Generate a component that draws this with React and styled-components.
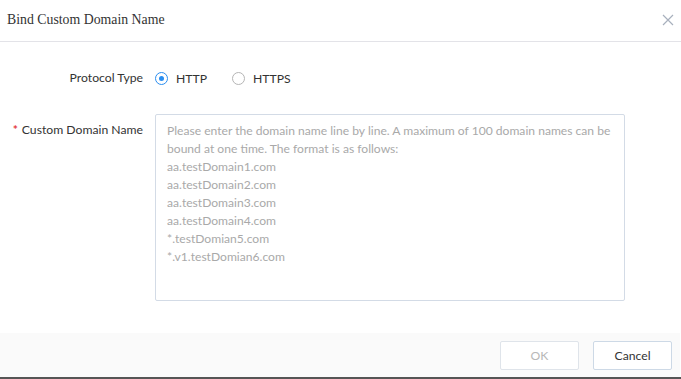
import React, { useState } from "react";
import styled, { createGlobalStyle } from "styled-components";

const GlobalStyle = createGlobalStyle`
  html, body {
    margin: 0;
    padding: 0;
    background: #fff;
  }
  * {
    box-sizing: border-box;
  }
`;

const Dialog = styled.div`
  width: 681px;
  height: 379px;
  display: flex;
  flex-direction: column;
  background: #fff;
  border-bottom: 2px solid #555;
  font-family: Lato, "Liberation Sans", sans-serif;
  font-size: 12.2px;
  color: #333;
`;

const Header = styled.div`
  height: 42px;
  display: flex;
  align-items: center;
  justify-content: space-between;
  padding: 0 6px 2px 7px;
  border-bottom: 1px solid #e3e3e8;
`;

const Title = styled.span`
  font-family: "Liberation Serif", serif;
  font-size: 13.8px;
  color: #333;
`;

const CloseButton = styled.button`
  border: none;
  background: none;
  padding: 0;
  width: 14px;
  height: 14px;
  display: flex;
  cursor: pointer;
`;

const Body = styled.div`
  flex: 1;
  padding: 27px 0 0;
  display: flex;
  flex-direction: column;
  gap: 27px;
`;

const Row = styled.div`
  display: flex;
  align-items: ${(p) => (p.$top ? "flex-start" : "center")};
`;

const Label = styled.label`
  width: 155px;
  text-align: right;
  padding-right: 12px;
  flex-shrink: 0;
  color: #333;
  line-height: 18px;
  padding-top: ${(p) => (p.$top ? "7px" : "0")};
  & span {
    color: #e4393c;
    font-weight: bold;
    margin-right: 4px;
  }
`;

const RadioGroup = styled.div`
  display: flex;
  align-items: center;
  gap: 25px;
`;

const Radio = styled.label`
  display: flex;
  align-items: center;
  gap: 8px;
  cursor: pointer;
  color: #333;
`;

const Dot = styled.span`
  width: 13px;
  height: 13px;
  border-radius: 50%;
  border: 1px solid ${(p) => (p.$on ? "#2b8ef0" : "#b5b5b5")};
  display: flex;
  align-items: center;
  justify-content: center;
  &::after {
    content: "";
    width: 5px;
    height: 5px;
    border-radius: 50%;
    background: ${(p) => (p.$on ? "#2b8ef0" : "transparent")};
  }
`;

const TextArea = styled.textarea`
  width: 470px;
  height: 187px;
  border: 1px solid #d3dbe6;
  border-radius: 2px;
  padding: 7px 6px 7px 11px;
  font-family: Lato, "Liberation Sans", sans-serif;
  font-size: 12.1px;
  line-height: 18px;
  color: #333;
  resize: none;
  outline: none;
  &::placeholder {
    color: #a9a9a9;
  }
`;

const Footer = styled.div`
  height: 44px;
  background: #fafafa;
  margin-right: 1px;
  display: flex;
  align-items: center;
  justify-content: flex-end;
  gap: 14px;
  padding: 0 8px 0 0;
`;

const Button = styled.button`
  width: 79px;
  height: 29px;
  background: #fff;
  border: 1px solid ${(p) => (p.disabled ? "#dfe4ea" : "#cdd9e6")};
  color: ${(p) => (p.disabled ? "#b8b8b8" : "#333")};
  font-family: Lato, "Liberation Sans", sans-serif;
  font-size: 12.2px;
  border-radius: 2px;
  cursor: ${(p) => (p.disabled ? "not-allowed" : "pointer")};
`;

const placeholder = `Please enter the domain name line by line. A maximum of 100 domain names can be bound at one time. The format is as follows:
aa.testDomain1.com
aa.testDomain2.com
aa.testDomain3.com
aa.testDomain4.com
*.testDomian5.com
*.v1.testDomian6.com`;

export default function App() {
  const [protocol, setProtocol] = useState("HTTP");
  const [domains, setDomains] = useState("");

  return (
    <>
      <GlobalStyle />
      <Dialog>
        <Header>
          <Title>Bind Custom Domain Name</Title>
          <CloseButton aria-label="close">
            <svg width="14" height="14" viewBox="0 0 14 14">
              <path d="M2 2 L12 12 M12 2 L2 12" stroke="#a8b0bd" strokeWidth="1.2" fill="none" />
            </svg>
          </CloseButton>
        </Header>
        <Body>
          <Row>
            <Label>Protocol Type</Label>
            <RadioGroup>
              {["HTTP", "HTTPS"].map((p) => (
                <Radio key={p} onClick={() => setProtocol(p)}>
                  <Dot $on={protocol === p} />
                  {p}
                </Radio>
              ))}
            </RadioGroup>
          </Row>
          <Row $top>
            <Label $top>
              <span>*</span>Custom Domain Name
            </Label>
            <TextArea
              value={domains}
              onChange={(e) => setDomains(e.target.value)}
              placeholder={placeholder}
            />
          </Row>
        </Body>
        <Footer>
          <Button disabled={!domains.trim()}>OK</Button>
          <Button>Cancel</Button>
        </Footer>
      </Dialog>
    </>
  );
}
